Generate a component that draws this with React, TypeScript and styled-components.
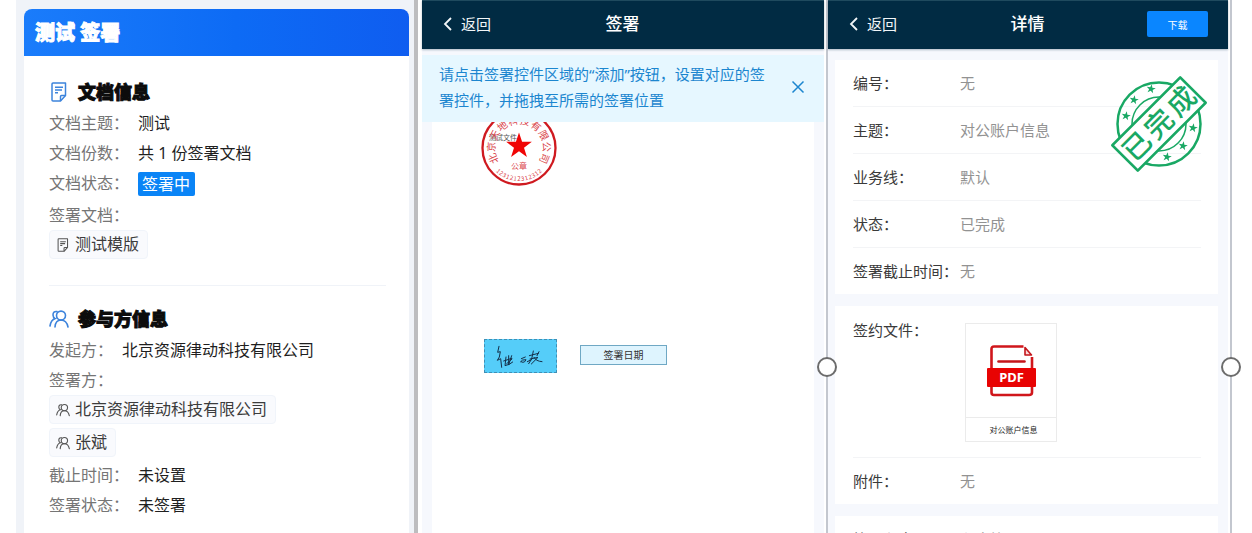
import React from "react";
import styled, { createGlobalStyle } from "styled-components";

const GlobalStyle = createGlobalStyle`
  *, *::before, *::after { box-sizing: border-box; }
  body {
    margin: 0;
    background: #fff;
    font-family: "Noto Sans", "Noto Sans CJK SC", sans-serif;
    font-size: 16px;
    color: #1f1f1f;
  }
  h1, h2, dl, dd, p, figure { margin: 0; }
  button { font-family: inherit; cursor: pointer; }
`;

const Board = styled.main`
  display: grid;
  grid-template-columns: 402fr 406fr 408fr;
  height: 100vh;
  padding: 0 20px 0 16px;
  overflow: hidden;
`;

/* ---------- summary screen ---------- */

const SummaryScreen = styled.section`
  min-width: 0;
  padding: 9px 5px 0 8px;
  background: #f0f3f8;
  border-right: 4px solid #bdbdbf;
`;

const SummaryCard = styled.article`
  min-height: 100%;
  background: #fff;
  border-radius: 8px 8px 0 0;
  overflow: hidden;
`;

const SummaryTitle = styled.h1`
  padding: 1px 11px 0;
  background: linear-gradient(90deg, #1a7cfb, #0d6bf5 55%, #0f5df0);
  color: #fff;
  font-size: 20px;
  font-weight: 900;
  line-height: 46px;
  -webkit-text-stroke: 1px currentColor;
`;

const SummaryBlock = styled.section`
  margin: 0 23px 0 25px;
  padding: 22px 0 23px;

  & + & {
    padding-top: 19px;
    border-top: 1px solid #f0f3f8;
  }
`;

const BlockTitle = styled.h2`
  display: flex;
  align-items: center;
  gap: 9px;
  margin-bottom: 2px;
  color: #0c0c0c;
  font-size: 18px;
  font-weight: 900;
  line-height: 28px;

  span { -webkit-text-stroke: 1px currentColor; }
`;

const Info = styled.dl`
  display: flex;
  flex-wrap: wrap;
  line-height: 30px;
`;

const InfoLabel = styled.dt`
  margin-right: 9px;
  color: #757575;
`;

const InfoValue = styled.dd`
  color: #1f1f1f;
`;

const StatusTag = styled.span`
  display: block;
  margin: 4px 0;
  padding: 0 5px 0 4px;
  border-radius: 2px;
  background: #0a84f6;
  color: #fff;
  line-height: 24px;
`;

const ChipList = styled.dd`
  display: flex;
  flex-direction: column;
  align-items: flex-start;
  gap: 4px;
  flex-basis: 100%;
  margin-bottom: 3px;
`;

const Chip = styled.span`
  display: flex;
  align-items: center;
  gap: 5px;
  padding: 0 8px 0 6px;
  border: 1px solid #f0f4fa;
  border-radius: 4px;
  background: #f9fafd;
  color: #3c3c3c;
  line-height: 27px;
`;

/* ---------- phone screens ---------- */

const NavBar = styled.header`
  position: relative;
  z-index: 1;
  display: grid;
  grid-template-columns: 1fr auto 1fr;
  align-items: center;
  height: 49px;
  padding: 0 20px 2px 19px;
  background: #012b43;
  border-top: 1px solid #1f4a5e;
  box-shadow: 0 1px 2px rgba(1, 43, 67, 0.3);
`;

const NavTitle = styled.h1`
  color: #fff;
  font-size: 17px;
  font-weight: 500;
  line-height: 24px;
`;

const BackButton = styled.button`
  display: flex;
  align-items: center;
  justify-self: start;
  gap: 6px;
  padding: 0;
  border: 0;
  background: none;
  color: #f2f6f8;
  font-size: 15px;
  line-height: 24px;
`;

const DownloadButton = styled.button`
  justify-self: end;
  width: 61px;
  height: 26px;
  padding: 0;
  border: 0;
  border-radius: 2px;
  background: #0a86ff;
  color: #fff;
  font-size: 10px;
`;

const SignScreen = styled.section`
  display: flex;
  flex-direction: column;
  min-width: 0;
  margin-left: 4px;
  background: #f6f8fd;
`;

const SignNotice = styled.div`
  display: flex;
  align-items: center;
  gap: 20px;
  margin-top: 6px;
  padding: 6px 19px 9px 17px;
  background: #e6f7ff;
  color: #1c86cf;
  font-size: 15px;
  line-height: 26px;

  p { flex: 1; }
`;

const CloseButton = styled.button`
  display: flex;
  padding: 0;
  border: 0;
  background: none;
  color: #1c86cf;
`;

const Paper = styled.div`
  position: relative;
  flex: 1;
  margin: 0 10px;
  background: #fff;
  overflow: hidden;
`;

const PaperItem = styled.div<{ $left: number; $top: number }>`
  position: absolute;
  left: ${(p) => p.$left}px;
  top: ${(p) => p.$top}px;
  display: flex;
`;

const SignatureField = styled.div`
  display: flex;
  width: 73px;
  height: 34px;
  border: 1px dashed #3f8fb5;
  background: #55cdf9;
`;

const DateField = styled.button`
  width: 87px;
  height: 20px;
  padding: 0;
  border: 1px solid #6fa8c4;
  background: #def4fe;
  color: #333;
  font-size: 10px;
  line-height: 18px;
`;

/* ---------- detail screen ---------- */

const DetailFrame = styled.section`
  position: relative;
  min-width: 0;
  margin-left: 2px;
  padding-right: 2px;
  border: solid #c3c7cf;
  border-width: 0 2px;
`;

const DetailBody = styled.div`
  display: flex;
  flex-direction: column;
  gap: 12px;
  height: calc(100% - 49px);
  padding: 11px 10px 0 7px;
  background: #f6f8fd;
  overflow: hidden;
`;

const DetailCard = styled.dl`
  position: relative;
  flex: none;
  padding: 0 17px 0 18px;
  background: #fff;
`;

const DetailRow = styled.div<{ $tall?: boolean }>`
  display: grid;
  grid-template-columns: 107px 1fr;
  padding: ${(p) => (p.$tall ? "12px 0 15px" : "11px 0")};
  font-size: 15px;
  line-height: 24px;

  & + & { border-top: 1px solid #f3f4f6; }
`;

const DetailLabel = styled.dt`
  color: #3a3a3a;
  white-space: nowrap;
`;

const DetailValue = styled.dd`
  color: #929292;
`;

const StampHolder = styled.dd`
  position: absolute;
  top: 14px;
  right: 9px;
  z-index: 1;
  display: flex;
`;

const FileCard = styled.figure`
  width: 92px;
  margin: 5px 0 0 5px;
  border: 1px solid #ebebeb;
`;

const FilePreview = styled.div`
  display: flex;
  align-items: center;
  justify-content: center;
  height: 94px;
  border-bottom: 1px solid #ebebeb;
`;

const FileName = styled.figcaption`
  padding-left: 5px;
  color: #222;
  font-size: 8px;
  line-height: 23px;
  text-align: center;
`;

const Handle = styled.span<{ $side: "left" | "right" }>`
  position: absolute;
  top: 357px;
  ${(p) => p.$side}: -11px;
  z-index: 2;
  width: 20px;
  height: 20px;
  border: 2px solid #6c6c6c;
  border-radius: 50%;
  background: #fff;
`;

/* ---------- drawings ---------- */

const DocIcon = ({ size, color }: { size: number; color: string }) => (
  <svg width={size} height={size} viewBox="-2 0 20 20" fill="none" stroke={color} strokeWidth="1.500" aria-hidden="true">
    <path d="M2 1h12.500v12.500l-5 5.500H2Q1 19 1 18V2Q1 1 2 1z" strokeLinejoin="round" />
    <path d="M9.500 19v-4.500q0-1 1-1h4M4 5.300h8M4 8h7M4 10.700h3" />
  </svg>
);

const PeopleIcon = ({ size, color }: { size: number; color: string }) => (
  <svg width={size} height={size} viewBox="0 0 20 20" fill="none" stroke={color} strokeWidth="1.600" strokeLinecap="round" aria-hidden="true">
    <circle cx="12" cy="6.600" r="4.500" />
    <path d="M6 18q.5-7 6-7t7 7" />
    <path d="M8 2.600Q4 2 4 6q0 2.500 2.200 3.600Q2 11 1 17" />
  </svg>
);

const ChevronIcon = () => (
  <svg width="14" height="16" viewBox="0 0 14 16" fill="none" stroke="currentColor" strokeWidth="1.800" aria-hidden="true">
    <path d="M10 2L4 8l6 6" />
  </svg>
);

const CloseIcon = () => (
  <svg width="14" height="14" viewBox="0 0 14 14" fill="none" stroke="currentColor" strokeWidth="1.500" aria-hidden="true">
    <path d="M1.500 1.500l11 11M12.500 1.500l-11 11" />
  </svg>
);

const starPoints = (cx: number, cy: number, r: number, tilt = 0) =>
  Array.from({ length: 10 }, (_, i) => {
    const a = ((i * 36 - 90 + tilt) * Math.PI) / 180;
    const d = i % 2 ? r * 0.39 : r;
    return `${(cx + d * Math.cos(a)).toFixed(2)},${(cy + d * Math.sin(a)).toFixed(2)}`;
  }).join(" ");

const sealName = Array.from("北京天地科技有限公司");
const sealCode = Array.from("1231212312312");

const Seal = () => (
  <svg width="80" height="80" viewBox="0 0 80 80" role="img" aria-label="公章">
    <text x="10" y="32" fontSize="7" fill="#555" fontFamily='"Noto Sans CJK SC", sans-serif'>测试文件</text>
    <circle cx="40" cy="40" r="36.500" fill="none" stroke="#cf1a20" strokeWidth="2.300" />
    <polygon points={starPoints(40, 38, 13.5)} fill="#f00505" />
    <g fill="#d9444a" fontFamily='"Noto Sans CJK SC", sans-serif' textAnchor="middle">
      {sealName.map((c, i) => (
        <text key={i} x="40" y="16" fontSize="10" transform={`rotate(${(i - 4.5) * 25} 40 40)`}>{c}</text>
      ))}
      {sealCode.map((c, i) => (
        <text key={i} x="40" y="73" fontSize="6" transform={`rotate(${(6 - i) * 7} 40 40)`}>{c}</text>
      ))}
      <text x="40" y="61" fontSize="8">公章</text>
    </g>
  </svg>
);

const Signature = () => (
  <svg width="71" height="32" viewBox="15 15 213 96" fill="none" stroke="#15304a" strokeWidth="3" strokeLinecap="round" strokeLinejoin="round" role="img" aria-label="张斌">
    <path d="M57 34l-4 18 8-2-3 16-6 10 10-5 3 26" />
    <path d="M78 66l-3 26 12-4M71 78l24-8M86 62l0 27 12-8M95 62l-9 27M80 86l16-14" />
    <path d="M124 71l12-5M122 80q3-7 16-6-3 8-9 8l-6-2" />
    <path d="M148 62l27-7M160 48l-5 24-9 14M150 72l24-5-20 20M162 67q6 12 24 13M171 62l6-12M142 80l12-6" />
  </svg>
);

const stampStars = [[42, 15], [25, 26], [17, 42], [84, 54], [74, 72], [58, 83]];

const DoneStamp = () => (
  <svg width="100" height="100" viewBox="0 0 100 100" fill="none" stroke="#19a864" role="img" aria-label="已完成">
    <circle cx="50" cy="50" r="41.500" strokeWidth="2.500" />
    <circle cx="50" cy="50" r="27" strokeWidth="1.500" />
    {stampStars.map(([x, y]) => (
      <polygon key={x} points={starPoints(x, y, 4.8, 10)} fill="#19a864" stroke="none" />
    ))}
    <g transform="rotate(-45 50 50)">
      <rect x="2" y="32" width="96" height="36" fill="#fff" strokeWidth="2.600" strokeLinejoin="round" />
      <text x="19 50 82" y="60" fontSize="28" fontWeight="500" textAnchor="middle" fill="#19a864" stroke="none" fontFamily='"Noto Sans CJK SC", sans-serif'>已完成</text>
    </g>
  </svg>
);

const PdfIcon = () => (
  <svg width="49" height="52" viewBox="0 0 49 52" role="img" aria-label="PDF">
    <path d="M4.500 24V4q0-2.500 2.500-2.500h29.500M45 12v12M4.500 40v7.500Q4.500 50 7 50h35q3 0 3-2.500V40" fill="none" stroke="#d0161b" strokeWidth="2.600" />
    <path d="M38 2.500l6.500 7.500H38z" fill="#fbd9da" stroke="#c4161b" strokeWidth="1.600" strokeLinejoin="round" />
    <path d="M11.500 16.500h26" stroke="#c4161b" strokeWidth="2.600" strokeLinecap="round" />
    <rect x="0" y="23" width="49" height="19" rx="1" fill="#e80303" />
    <text x="24.500" y="37" textAnchor="middle" fontFamily='"Noto Sans", sans-serif' fontSize="13" fontWeight="700" fill="#fff">PDF</text>
  </svg>
);

/* ---------- composed parts ---------- */

const InfoRow = ({ label, children }: { label: string; children: React.ReactNode }) => (
  <Info>
    <InfoLabel>{label}：</InfoLabel>
    <InfoValue>{children}</InfoValue>
  </Info>
);

const Row = ({ label, tall, children }: { label: string; tall?: boolean; children: React.ReactNode }) => (
  <DetailRow $tall={tall}>
    <DetailLabel>{label}：</DetailLabel>
    <DetailValue>{children}</DetailValue>
  </DetailRow>
);

const Nav = ({ title, children }: { title: string; children?: React.ReactNode }) => (
  <NavBar>
    <BackButton type="button">
      <ChevronIcon />
      返回
    </BackButton>
    <NavTitle>{title}</NavTitle>
    {children}
  </NavBar>
);

const signers = ["北京资源律动科技有限公司", "张斌"];

export default function App() {
  return (
    <>
      <GlobalStyle />
      <Board>
        <SummaryScreen>
          <SummaryCard>
            <SummaryTitle>测试 签署</SummaryTitle>
            <SummaryBlock>
              <BlockTitle>
                <DocIcon size={20} color="#3d84dc" />
                <span>文档信息</span>
              </BlockTitle>
              <InfoRow label="文档主题">测试</InfoRow>
              <InfoRow label="文档份数">共 1 份签署文档</InfoRow>
              <InfoRow label="文档状态">
                <StatusTag>签署中</StatusTag>
              </InfoRow>
              <Info>
                <InfoLabel>签署文档：</InfoLabel>
                <ChipList>
                  <Chip>
                    <DocIcon size={14} color="#555" />
                    测试模版
                  </Chip>
                </ChipList>
              </Info>
            </SummaryBlock>
            <SummaryBlock>
              <BlockTitle>
                <PeopleIcon size={20} color="#3d84dc" />
                <span>参与方信息</span>
              </BlockTitle>
              <InfoRow label="发起方">北京资源律动科技有限公司</InfoRow>
              <Info>
                <InfoLabel>签署方：</InfoLabel>
                <ChipList>
                  {signers.map((name) => (
                    <Chip key={name}>
                      <PeopleIcon size={14} color="#555" />
                      {name}
                    </Chip>
                  ))}
                </ChipList>
              </Info>
              <InfoRow label="截止时间">未设置</InfoRow>
              <InfoRow label="签署状态">未签署</InfoRow>
            </SummaryBlock>
          </SummaryCard>
        </SummaryScreen>

        <SignScreen>
          <Nav title="签署" />
          <SignNotice>
            <p>请点击签署控件区域的“添加”按钮，设置对应的签署控件，并拖拽至所需的签署位置</p>
            <CloseButton type="button" aria-label="关闭">
              <CloseIcon />
            </CloseButton>
          </SignNotice>
          <Paper>
            <PaperItem $left={47} $top={-14}>
              <Seal />
            </PaperItem>
            <PaperItem $left={52} $top={217}>
              <SignatureField>
                <Signature />
              </SignatureField>
            </PaperItem>
            <PaperItem $left={148} $top={223}>
              <DateField type="button">签署日期</DateField>
            </PaperItem>
          </Paper>
        </SignScreen>

        <DetailFrame>
          <Nav title="详情">
            <DownloadButton type="button">下载</DownloadButton>
          </Nav>
          <DetailBody>
            <DetailCard>
              <Row label="编号">无</Row>
              <Row label="主题">对公账户信息</Row>
              <Row label="业务线">默认</Row>
              <Row label="状态">已完成</Row>
              <Row label="签署截止时间">无</Row>
              <StampHolder>
                <DoneStamp />
              </StampHolder>
            </DetailCard>
            <DetailCard>
              <Row label="签约文件" tall>
                <FileCard>
                  <FilePreview>
                    <PdfIcon />
                  </FilePreview>
                  <FileName>对公账户信息</FileName>
                </FileCard>
              </Row>
              <Row label="附件">无</Row>
            </DetailCard>
            <DetailCard>
              <Row label="签署顺序">顺序签署</Row>
            </DetailCard>
          </DetailBody>
          <Handle $side="left" />
          <Handle $side="right" />
        </DetailFrame>
      </Board>
    </>
  );
}
